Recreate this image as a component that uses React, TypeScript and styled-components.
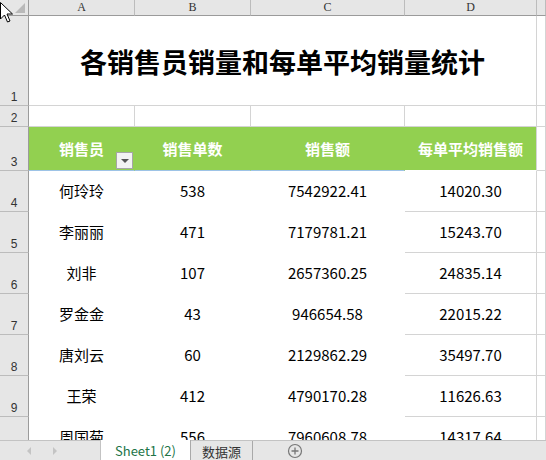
import React from "react";
import styled, { createGlobalStyle } from "styled-components";

const Global = createGlobalStyle`
  html, body { margin: 0; padding: 0; background: #fff; }
  body { width: 546px; height: 460px; overflow: hidden; font-family: "Noto Sans CJK SC", "Liberation Sans", sans-serif; }
  * { box-sizing: border-box; }
`;

const Window = styled.div`
  position: relative;
  width: 546px;
  height: 460px;
  display: flex;
  flex-direction: column;
  overflow: hidden;
`;

const SheetArea = styled.div`
  flex: 1;
  overflow: hidden;
`;

const Grid = styled.div`
  display: grid;
  grid-template-columns: 29px 106px 116px 154px 132px 1fr;
  grid-template-rows: 16px 90px 21px 44px repeat(7, 41px);
`;

const Corner = styled.div`
  position: relative;
  background: #e6e6e6;
  border-right: 1px solid #9b9b9b;
  border-bottom: 1px solid #9b9b9b;
`;

const CornerTri = styled.div`
  position: absolute;
  right: 3px;
  bottom: 2px;
  width: 0;
  height: 0;
  border-left: 10px solid transparent;
  border-bottom: 10px solid #b9b9b9;
`;

const ColHead = styled.div`
  background: #e6e6e6;
  border-right: 1px solid #bcbcbc;
  border-bottom: 1px solid #9b9b9b;
  font-family: "Liberation Serif", serif;
  font-size: 12px;
  line-height: 15px;
  color: #333;
  text-align: center;
`;

const RowHead = styled.div`
  background: #e6e6e6;
  border-right: 1px solid #9b9b9b;
  border-bottom: 1px solid #bcbcbc;
  font-family: "Liberation Sans", sans-serif;
  font-size: 12px;
  color: #333;
  display: flex;
  align-items: flex-end;
  justify-content: center;
  padding-bottom: 1px;
`;

const TitleCell = styled.div`
  grid-column: span 4;
  border-right: 1px solid #d4d4d4;
  border-bottom: 1px solid #d4d4d4;
  display: flex;
  align-items: center;
  justify-content: center;
  font-size: 27px;
  font-weight: 700;
  color: #000;
  padding-top: 1px;
`;

const Blank = styled.div`
  border-right: 1px solid #d4d4d4;
  border-bottom: 1px solid #d4d4d4;
`;

const HeadCell = styled.div<{ $last?: boolean }>`
  position: relative;
  background: #92d050;
  border-right: 1px solid ${(p) => (p.$last ? "#d4d4d4" : "#92d050")};
  border-bottom: 1px solid ${(p) => (p.$last ? "#ffffff" : "#9dc3e6")};
  display: flex;
  align-items: center;
  justify-content: center;
  color: #fff;
  font-weight: 700;
  font-size: 15px;
  padding-bottom: 1px;
`;

const DropBtn = styled.div`
  position: absolute;
  right: 1px;
  bottom: 1px;
  width: 17px;
  height: 17px;
  background: #f3f3f3;
  border: 1px solid #a6a6a6;
  display: flex;
  align-items: center;
  justify-content: center;
`;

const DropTri = styled.div`
  width: 0;
  height: 0;
  border-left: 4px solid transparent;
  border-right: 4px solid transparent;
  border-top: 4px solid #555;
  margin-top: 1px;
`;

const DataCell = styled.div<{ $grid?: boolean }>`
  border-right: 1px solid ${(p) => (p.$grid ? "#d4d4d4" : "#ffffff")};
  border-bottom: 1px solid ${(p) => (p.$grid ? "#d4d4d4" : "#ffffff")};
  display: flex;
  align-items: center;
  justify-content: center;
  font-size: 15px;
  color: #000;
  padding-bottom: 1px;
`;

const TabBar = styled.div`
  height: 20px;
  flex: none;
  background: #e6e6e6;
  border-top: 1px solid #c3c3c3;
  display: flex;
  align-items: stretch;
`;

const NavArea = styled.div`
  width: 100px;
  display: flex;
  align-items: center;
  padding-left: 27px;
  gap: 22px;
`;

const Arrow = styled.div<{ $dir: "l" | "r" }>`
  width: 0;
  height: 0;
  border-top: 4px solid transparent;
  border-bottom: 4px solid transparent;
  ${(p) => (p.$dir === "l" ? "border-right: 4px solid #c4c4c4;" : "border-left: 4px solid #c4c4c4;")}
`;

const Tab = styled.div<{ $active?: boolean }>`
  width: ${(p) => (p.$active ? "91px" : "62px")};
  background: ${(p) => (p.$active ? "#ffffff" : "#e6e6e6")};
  color: ${(p) => (p.$active ? "#217346" : "#333")};
  border-right: 1px solid #a9a9a9;
  ${(p) => (p.$active ? "border-left: 1px solid #c3c3c3; margin-top: -1px;" : "")}
  display: flex;
  align-items: center;
  justify-content: center;
  font-size: 13px;
  padding-top: 1px;
`;

const AddBtn = styled.div`
  margin-left: 34px;
  display: flex;
  align-items: center;
`;

const Cursor = styled.svg`
  position: absolute;
  left: 0;
  top: 2px;
`;

const rows = [
  ["何玲玲", "538", "7542922.41", "14020.30"],
  ["李丽丽", "471", "7179781.21", "15243.70"],
  ["刘非", "107", "2657360.25", "24835.14"],
  ["罗金金", "43", "946654.58", "22015.22"],
  ["唐刘云", "60", "2129862.29", "35497.70"],
  ["王荣", "412", "4790170.28", "11626.63"],
  ["周国菊", "556", "7960608.78", "14317.64"],
];

export default function App() {
  return (
    <Window>
      <Global />
      <SheetArea>
        <Grid>
          <Corner>
            <CornerTri />
          </Corner>
          {["A", "B", "C", "D", ""].map((c, i) => (
            <ColHead key={i}>{c}</ColHead>
          ))}

          <RowHead>1</RowHead>
          <TitleCell>各销售员销量和每单平均销量统计</TitleCell>
          <Blank />

          <RowHead>2</RowHead>
          <Blank />
          <Blank />
          <Blank />
          <Blank />
          <Blank />

          <RowHead>3</RowHead>
          <HeadCell>
            销售员
            <DropBtn>
              <DropTri />
            </DropBtn>
          </HeadCell>
          <HeadCell>销售单数</HeadCell>
          <HeadCell>销售额</HeadCell>
          <HeadCell $last>每单平均销售额</HeadCell>
          <Blank />

          {rows.map((r, i) => (
            <React.Fragment key={i}>
              <RowHead>{i + 4}</RowHead>
              <DataCell>{r[0]}</DataCell>
              <DataCell>{r[1]}</DataCell>
              <DataCell>{r[2]}</DataCell>
              <DataCell $grid>{r[3]}</DataCell>
              <Blank />
            </React.Fragment>
          ))}
        </Grid>
      </SheetArea>
      <TabBar>
        <NavArea>
          <Arrow $dir="l" />
          <Arrow $dir="r" />
        </NavArea>
        <Tab $active>Sheet1 (2)</Tab>
        <Tab>数据源</Tab>
        <AddBtn>
          <svg width="16" height="16" viewBox="0 0 16 16">
            <circle cx="8" cy="8" r="6.5" fill="none" stroke="#777" strokeWidth="1.2" />
            <path d="M8 4.5v7M4.5 8h7" stroke="#777" strokeWidth="1.3" />
          </svg>
        </AddBtn>
      </TabBar>
      <Cursor width="14" height="22" viewBox="0 0 14 22">
        <path d="M0.5 0.5 L0.5 17 L4.5 13 L7.5 20 L10 19 L7 12 L12.5 12 Z" fill="#fff" stroke="#000" strokeWidth="1" strokeLinejoin="miter" />
      </Cursor>
    </Window>
  );
}
